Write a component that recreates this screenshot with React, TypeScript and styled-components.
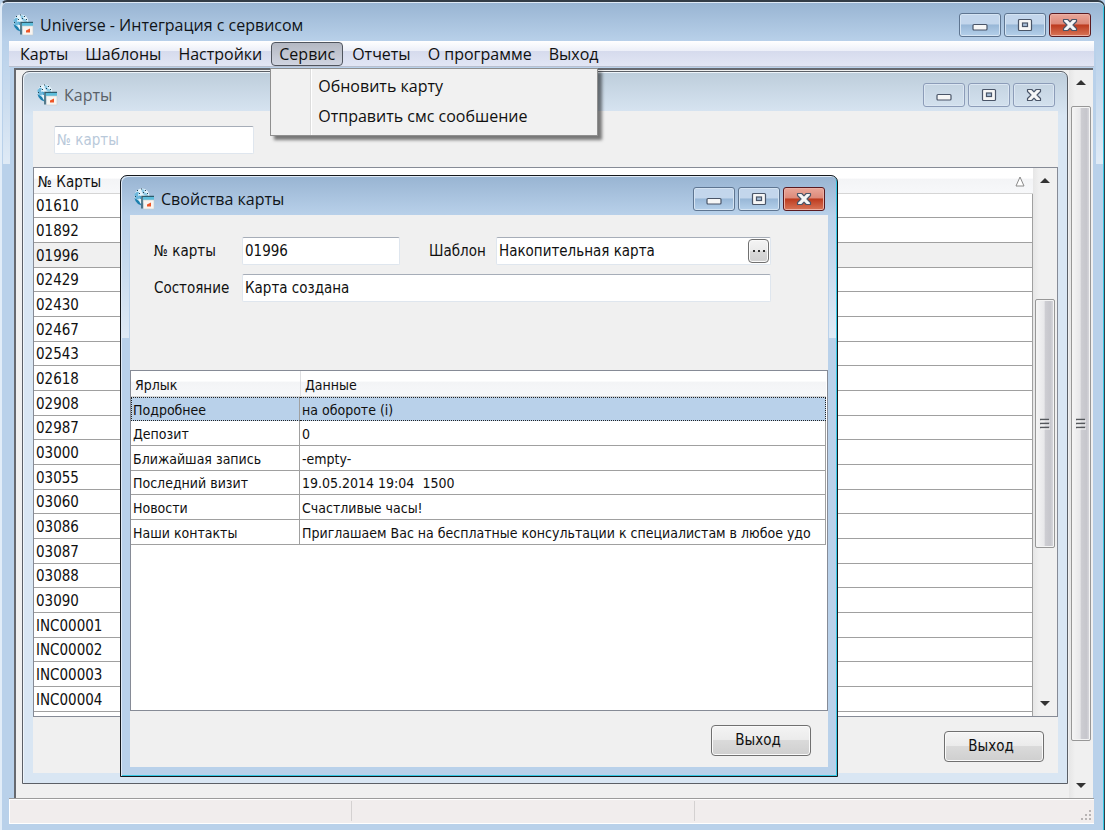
import React from 'react';
import styled, { createGlobalStyle, css } from 'styled-components';

const SEGOE = "'Open Sans', 'Noto Sans', sans-serif";
const TAHOMA = "'DejaVu Sans Condensed', 'DejaVu Sans', sans-serif";

const GlobalStyle = createGlobalStyle`
  *, *::before, *::after { box-sizing: border-box; }
  body { margin: 0; background: #b9d1ea; color: #101010; font: 15px/20px ${TAHOMA}; }
  button, input { font: inherit; color: inherit; margin: 0; padding: 0; }
`;

type Tone = 'active' | 'inactive';

const activeFrame = css`
  background-color: #b9d1ea;
  background-image:
    linear-gradient(rgba(255, 255, 255, 0), rgba(255, 255, 255, 0.55)),
    linear-gradient(rgba(255, 255, 255, 0), rgba(255, 255, 255, 0.55)),
    linear-gradient(#98b4d2, #b9d1ea);
  background-size: 7px 120px, 7px 120px, 100% 40px;
  background-position: left 1px top 42px, right 1px top 42px, left top;
`;

const inactiveFrame = css`
  background-color: #d9e6f3;
  background-image: linear-gradient(#bdcddb, #d9e6f3);
  background-size: 100% 44px;
`;

const frame = css<{ $tone: Tone }>`
  display: flex;
  flex-direction: column;
  ${p => (p.$tone === 'active' ? activeFrame : inactiveFrame)}
  background-repeat: no-repeat;
`;

const MainWindow = styled.div<{ $tone: Tone }>`
  ${frame}
  min-height: 100vh;
  padding: 0 10px 6px 7px;
  border: solid #333c46;
  border-width: 2px 1px 0 2px;
  border-left-color: #e2edf8;
  border-radius: 7px 7px 0 0;
  box-shadow: inset 0 1px #dfeaf6, inset -1px 0 #35c8e4;
`;

const ChildWindow = styled.section<{ $tone: Tone }>`
  ${frame}
  position: absolute;
  border-radius: 7px 7px 0 0;
`;

const CardsWindow = styled(ChildWindow)`
  inset: 1px 25px 14px 6px;
  padding: 0 9px 10px 10px;
  border: 1px solid #5b5f66;
  box-shadow: inset 1px 1px #eef4fa;
`;

const CardDialog = styled(ChildWindow)`
  inset: 105px 255px 21px 104px;
  padding: 0 9px 9px;
  border: 1px solid #16191d;
  box-shadow: inset 1px 1px #dfeaf6, inset -1px -1px #35c8e4;
`;

const TitleBar = styled.header<{ $tone: Tone }>`
  display: flex;
  align-items: center;
  gap: 6px;
  height: 39px;
  flex: none;
  padding: 7px 3px 0;
  color: ${p => (p.$tone === 'active' ? '#101418' : '#5a6168')};
`;

const Title = styled.h1`
  flex: 1;
  margin: 0;
  font: 400 16px/24px ${SEGOE};
  white-space: nowrap;
`;

const WindowButtons = styled.div`
  display: flex;
  gap: 3px;
`;

const WindowButton = styled.button<{ $look: 'blue' | 'red' | 'faded' }>`
  display: grid;
  place-items: center;
  width: 42px;
  height: 24px;
  border-radius: 3px;
  ${p =>
    p.$look === 'blue' &&
    css`
      border: 1px solid #5e7591;
      background: linear-gradient(#c3d6ec 0 45%, #98b7d7 50%, #b5d0ea);
      box-shadow: inset 0 0 0 1px #d5e4f3;
    `}
  ${p =>
    p.$look === 'red' &&
    css`
      border: 1px solid #5a1a20;
      background: linear-gradient(#e9a79a, #dd8a7a 45%, #bd3b1f 50%, #d87558);
      box-shadow: inset 0 0 0 1px #ecb0a4;
    `}
  ${p =>
    p.$look === 'faded' &&
    css`
      border: 1px solid #8c9cb8;
      background: transparent;
      box-shadow: inset 0 0 0 1px #dbe6f2;
    `}
`;

const MenuBar = styled.nav`
  position: relative;
  display: flex;
  align-items: center;
  gap: 1px;
  height: 26px;
  flex: none;
  padding: 0 3px;
  border-bottom: 1px solid #b9bfce;
  background: linear-gradient(#fff, #eceff8 40%, #d6dbed 42%, #e2e6f4);
`;

const MenuButton = styled.button<{ $open?: boolean }>`
  display: block;
  height: 24px;
  padding: 0 7px;
  border: 1px solid ${p => (p.$open ? '#50555e' : 'transparent')};
  border-radius: 4px;
  background: ${p => (p.$open ? 'linear-gradient(#b4b8c2, #d0d4e0)' : 'none')};
  font: 16px/20px ${SEGOE};
  white-space: nowrap;
`;

const MenuAnchor = styled.div`
  position: relative;
`;

const DropDown = styled.div`
  position: absolute;
  z-index: 5;
  top: 26px;
  left: -1px;
  width: 328px;
  padding: 2px 3px 4px;
  border: 1px solid #8f8f8f;
  background: linear-gradient(90deg, #f1f1f1 39px, #dcdcdc 39px 40px, #fff 40px 41px, #f1f1f1 41px);
  box-shadow: 4px 4px 3px rgba(0, 0, 0, 0.5);
`;

const DropDownItem = styled.button`
  display: block;
  width: 100%;
  height: 30px;
  padding-left: 44px;
  border: 0;
  background: none;
  text-align: left;
  font: 16px/20px ${SEGOE};
`;

const Workspace = styled.main`
  flex: 1;
  display: flex;
  margin: 1px 1px 0 5px;
  position: relative;
  min-height: 728px;
  border: solid #66696f;
  border-width: 2px 0 0 2px;
  background: #f0f0f0;
  justify-content: flex-end;
`;

const ClientArea = styled.div`
  flex: 1;
  display: flex;
  flex-direction: column;
  min-height: 0;
  background: #f0f0f0;
`;

const TextBox = styled.input`
  width: 100%;
  height: 28px;
  padding: 0 2px;
  border: 1px solid #dfe6ee;
  border-top-color: #a6adb8;
  border-radius: 2px;
  background: #fff;
  &::placeholder { color: #b9c9da; opacity: 1; }
`;

const SearchBar = styled.div`
  padding: 15px 0 13px 21px;
  & > input { width: 200px; display: block; }
`;

const ListPane = styled.div`
  display: flex;
  flex: 1;
  min-height: 0;
  border: 1px solid #868b96;
  background: #fff;
`;

const ListBody = styled.div`
  flex: 1;
  overflow: hidden;
  contain: size;
`;

const DataTable = styled.table`
  width: 100%;
  border-collapse: separate;
  border-spacing: 0;
  table-layout: fixed;
  th, td {
    padding: 1px 2px 0;
    text-align: left;
    font-weight: 400;
    white-space: nowrap;
    overflow: hidden;
  }
  th {
    height: 26px;
    padding: 2px 4px 0;
    border-bottom: 1px solid #d5d5d5;
    background: linear-gradient(#fff 40%, #f3f4f6 45%, #f7f8fa);
  }
  th + th { border-left: 1px solid #dedfe2; }
  td {
    border-bottom: 1px solid #a0a0a0;
    border-right: 1px solid #a0a0a0;
  }
  tbody tr { height: 25px; }
  tbody tr:nth-child(3n + 1) { height: 24px; }
`;

const DetailTable = styled(DataTable)`
  font-size: 14px;
`;

const DetailBody = styled(ListBody)`
  padding-right: 1px;
`;

const HeadCell = styled.div`
  display: flex;
  align-items: center;
  justify-content: space-between;
  padding-right: 4px;
`;

const CardRow = styled.tr<{ $current: boolean }>`
  background: ${p => (p.$current ? '#f0f0f0' : '#fff')};
`;

const DetailRow = styled.tr<{ $selected: boolean }>`
  ${p =>
    p.$selected &&
    css`
      background: #b9d1ea;
      && td { border-top: 1px dotted #222; border-bottom: 1px dotted #222; }
      td:first-child { border-left: 1px dotted #222; padding-left: 1px; }
      td:last-child { border-right: 1px dotted #222; }
    `}
`;

const Footer = styled.footer<{ $side: number }>`
  display: flex;
  justify-content: flex-end;
  flex: none;
  padding: 14px ${p => p.$side}px 11px;
`;

const pushFace = css`
  border: 1px solid #707070;
  border-radius: 4px;
  background: linear-gradient(#f4f4f4, #ebebeb 48%, #dadada 50%, #cfcfcf);
  box-shadow: inset 0 0 0 1px #fafafa;
`;

const PushButton = styled.button`
  ${pushFace}
  width: 100px;
  height: 31px;
  padding: 0 6px 1px 0;
`;

const CardForm = styled.form`
  display: grid;
  grid-template-columns: 88px 158px 96px 1fr;
  row-gap: 9px;
  align-items: center;
  padding: 22px 57px 68px 24px;
`;

const WideField = styled.div`
  grid-column: 2 / -1;
  display: flex;
`;

const IndentedLabel = styled.label`
  padding-left: 29px;
`;

const PickerField = styled.div`
  display: flex;
  align-items: center;
  height: 28px;
  padding-right: 1px;
  border: 1px solid #dfe6ee;
  border-top-color: #a6adb8;
  border-radius: 2px;
  background: #fff;
  & > input { flex: 1; min-width: 0; height: 26px; border: 0; }
`;

const EllipsisButton = styled.button`
  ${pushFace}
  display: grid;
  place-items: center;
  width: 21px;
  height: 24px;
`;

const ScrollTrack = styled.div`
  display: flex;
  flex-direction: column;
  flex: none;
  width: 24px;
  padding: 0 2px;
  background: linear-gradient(90deg, #e6e6e6, #f0f0f0 25%, #f0f0f0);
`;

const ScrollArrow = styled.button`
  display: grid;
  place-items: center;
  height: 25px;
  flex: none;
  border: 0;
  background: none;
`;

const ScrollGap = styled.div<{ $grow: number }>`
  flex: ${p => p.$grow} 1 0;
`;

const ScrollThumb = styled.div<{ $grow: number }>`
  flex: ${p => p.$grow} 1 0;
  display: grid;
  place-items: center;
  border: 1px solid #979797;
  border-radius: 2px;
  background: linear-gradient(90deg, #f5f5f5, #e8e8ea 45%, #cdcdd2 52%, #c6c6cc 80%, #dcdce0);
  box-shadow: inset 0 0 0 1px #f4f4f4;
`;

const StatusBar = styled.footer`
  display: grid;
  grid-template-columns: 340px 343px 1fr;
  height: 26px;
  flex: none;
  padding: 2px;
  border-top: 1px solid #9b9b9b;
  border-bottom: 1px solid #fff;
  background: #f1eded;
  box-shadow: inset 1px 1px #fff;
`;

const StatusCell = styled.div`
  display: flex;
  justify-content: flex-end;
  align-items: flex-end;
  & + & { border-left: 1px solid #d4d1d1; }
`;

function AppIcon() {
  return (
    <svg width="22" height="22" viewBox="0 0 22 22" aria-hidden="true">
      <circle cx="9" cy="8" r="7.500" fill="#e4f3fb" />
      <path d="M1.500 6L4 3.500L6 4.500L5 7L6.500 9L5.500 11.500L3 11L1.500 8Z" fill="#6db7db" />
      <path d="M9 1L12 2L11 4L14 5.500L15 8L12 7.500L10 6L8.500 3Z" fill="#8fcae6" />
      <path d="M1.500 10L4 11.500L6 13L8.500 17.500L5 16L2.500 13Z" fill="#1b7fae" />
      <path d="M6 7.500L8 8L8 11L6.500 11Z" fill="#4ba5cf" />
      <path d="M4 2.500h1M8 1h1M12 2.500h1M6 5.500h1M10 4.500h1M14 5.500h1M2 8.500h1" stroke="#24424f" />
      <path d="M9 20.500V8.500H21" fill="none" stroke="#2d5b6c" strokeWidth="1.500" />
      <path d="M10 9h11v3H10z" fill="#5cbddb" />
      <path d="M10.500 12h10.500v9H10.500z" fill="#f8f4f0" stroke="#c3ccd2" strokeWidth=".6" />
      <path d="M14 18.500V16.500L18 14.500V18.500Z" fill="#ee5526" />
    </svg>
  );
}

const glyphStroke = '#4a5568';

function MinimizeGlyph() {
  return (
    <svg width="18" height="14" viewBox="0 0 18 14" aria-hidden="true">
      <rect x="2" y="6.500" width="14" height="5.500" rx="1" fill="#f6f6f6" stroke={glyphStroke} strokeWidth="1.200" />
    </svg>
  );
}

function MaximizeGlyph() {
  return (
    <svg width="18" height="14" viewBox="0 0 18 14" aria-hidden="true">
      <rect x="2.500" y="1.500" width="13" height="11" rx="1" fill="#f6f6f6" stroke={glyphStroke} strokeWidth="1.200" />
      <rect x="6.500" y="5" width="5" height="3.500" fill="#a9c0da" stroke={glyphStroke} strokeWidth="1.200" />
    </svg>
  );
}

function CloseGlyph() {
  return (
    <svg width="18" height="14" viewBox="0 0 18 14" aria-hidden="true">
      <path
        d="M2.500 1.500H6.800L9 3.800L11.200 1.500H15.500V3.500L12 7L15.500 10.500V12.500H11.200L9 10.200L6.800 12.500H2.500V10.500L6 7L2.500 3.500Z"
        fill="#f6f6f6"
        stroke={glyphStroke}
        strokeWidth="1.200"
        strokeLinejoin="round"
      />
    </svg>
  );
}

function Controls({ faded = false }: { faded?: boolean }) {
  const look = faded ? 'faded' : 'blue';
  return (
    <WindowButtons>
      <WindowButton type="button" $look={look} aria-label="Свернуть"><MinimizeGlyph /></WindowButton>
      <WindowButton type="button" $look={look} aria-label="Развернуть"><MaximizeGlyph /></WindowButton>
      <WindowButton type="button" $look={faded ? 'faded' : 'red'} aria-label="Закрыть"><CloseGlyph /></WindowButton>
    </WindowButtons>
  );
}

function Scrollbar({ before, thumb, after }: { before: number; thumb: number; after: number }) {
  return (
    <ScrollTrack>
      <ScrollArrow type="button" aria-label="Вверх">
        <svg width="10" height="5" viewBox="0 0 10 5" aria-hidden="true"><path d="M0 5L5 0L10 5Z" fill="#333" /></svg>
      </ScrollArrow>
      <ScrollGap $grow={before} />
      <ScrollThumb $grow={thumb}>
        <svg width="10" height="12" viewBox="0 0 10 12" aria-hidden="true">
          <path d="M0 1.500H9M0 5.500H9M0 9.500H9" stroke="#55585c" strokeWidth="1.500" />
          <path d="M1 3H10M1 7H10M1 11H10" stroke="#f6f6f6" />
        </svg>
      </ScrollThumb>
      <ScrollGap $grow={after} />
      <ScrollArrow type="button" aria-label="Вниз">
        <svg width="10" height="5" viewBox="0 0 10 5" aria-hidden="true"><path d="M0 0L5 5L10 0Z" fill="#333" /></svg>
      </ScrollArrow>
    </ScrollTrack>
  );
}

const cards = [
  '01610', '01892', '01996', '02429', '02430', '02467', '02543', '02618', '02908', '02987', '03000',
  '03055', '03060', '03086', '03087', '03088', '03090', 'INC00001', 'INC00002', 'INC00003', 'INC00004', '',
];

const details: [string, string][] = [
  ['Подробнее', 'на обороте (i)'],
  ['Депозит', '0'],
  ['Ближайшая запись', '-empty-'],
  ['Последний визит', '19.05.2014 19:04\u00a0 1500'],
  ['Новости', 'Счастливые часы!'],
  ['Наши контакты', 'Приглашаем Вас на бесплатные консультации к специалистам в любое удо'],
];

export default function App() {
  return (
    <MainWindow $tone="active">
      <GlobalStyle />
      <TitleBar $tone="active">
        <AppIcon />
        <Title>Universe - Интеграция с сервисом</Title>
        <Controls />
      </TitleBar>

      <MenuBar>
        <MenuButton type="button">Карты</MenuButton>
        <MenuButton type="button">Шаблоны</MenuButton>
        <MenuButton type="button">Настройки</MenuButton>
        <MenuAnchor>
          <MenuButton type="button" $open aria-expanded="true">Сервис</MenuButton>
          <DropDown>
            <DropDownItem type="button">Обновить карту</DropDownItem>
            <DropDownItem type="button">Отправить смс сообшение</DropDownItem>
          </DropDown>
        </MenuAnchor>
        <MenuButton type="button">Отчеты</MenuButton>
        <MenuButton type="button">О программе</MenuButton>
        <MenuButton type="button">Выход</MenuButton>
      </MenuBar>

      <Workspace>
        <CardsWindow $tone="inactive">
          <TitleBar $tone="inactive">
            <AppIcon />
            <Title as="h2">Карты</Title>
            <Controls faded />
          </TitleBar>
          <ClientArea>
            <SearchBar>
              <TextBox placeholder="№ карты" aria-label="№ карты" />
            </SearchBar>
            <ListPane>
              <ListBody>
                <DataTable>
                  <thead>
                    <tr>
                      <th>
                        <HeadCell>
                          № Карты
                          <svg width="10" height="11" viewBox="0 0 10 11" aria-hidden="true">
                            <path d="M1 10L5 1L9 10Z" fill="#fff" stroke="#8a8a8a" />
                          </svg>
                        </HeadCell>
                      </th>
                    </tr>
                  </thead>
                  <tbody>
                    {cards.map(card => (
                      <CardRow key={card} $current={card === '01996'}>
                        <td>{card}</td>
                      </CardRow>
                    ))}
                  </tbody>
                </DataTable>
              </ListBody>
              <Scrollbar before={107} thumb={248} after={144} />
            </ListPane>
            <Footer $side={14}>
              <PushButton type="button">Выход</PushButton>
            </Footer>
          </ClientArea>
        </CardsWindow>

        <CardDialog $tone="active" role="dialog" aria-label="Свойства карты">
          <TitleBar $tone="active">
            <AppIcon />
            <Title as="h2">Свойства карты</Title>
            <Controls />
          </TitleBar>
          <ClientArea>
            <CardForm>
              <label htmlFor="number">№ карты</label>
              <TextBox id="number" defaultValue="01996" />
              <IndentedLabel htmlFor="template">Шаблон</IndentedLabel>
              <PickerField>
                <TextBox id="template" defaultValue="Накопительная карта" />
                <EllipsisButton type="button" aria-label="Выбрать шаблон">
                  <svg width="12" height="2" viewBox="0 0 12 2" aria-hidden="true">
                    <path d="M0 0h2v2H0zM5 0h2v2H5zM10 0h2v2h-2z" fill="#333" />
                  </svg>
                </EllipsisButton>
              </PickerField>
              <label htmlFor="state">Состояние</label>
              <WideField>
                <TextBox id="state" defaultValue="Карта создана" />
              </WideField>
            </CardForm>
            <ListPane>
              <DetailBody>
                <DetailTable>
                  <colgroup>
                    <col width="169" />
                    <col />
                  </colgroup>
                  <thead>
                    <tr>
                      <th>Ярлык</th>
                      <th>Данные</th>
                    </tr>
                  </thead>
                  <tbody>
                    {details.map(([label, value], i) => (
                      <DetailRow key={label} $selected={i === 0}>
                        <td>{label}</td>
                        <td>{value}</td>
                      </DetailRow>
                    ))}
                  </tbody>
                </DetailTable>
              </DetailBody>
            </ListPane>
            <Footer $side={17}>
              <PushButton type="button">Выход</PushButton>
            </Footer>
          </ClientArea>
        </CardDialog>

        <Scrollbar before={11} thumb={635} after={32} />
      </Workspace>

      <StatusBar>
        <StatusCell />
        <StatusCell />
        <StatusCell>
          <svg width="12" height="12" viewBox="0 0 12 12" aria-hidden="true">
            <path d="M9 1h2v2H9zM9 5h2v2H9zM9 9h2v2H9zM5 5h2v2H5zM5 9h2v2H5zM1 9h2v2H1z" fill="#b8b4b4" />
          </svg>
        </StatusCell>
      </StatusBar>
    </MainWindow>
  );
}
